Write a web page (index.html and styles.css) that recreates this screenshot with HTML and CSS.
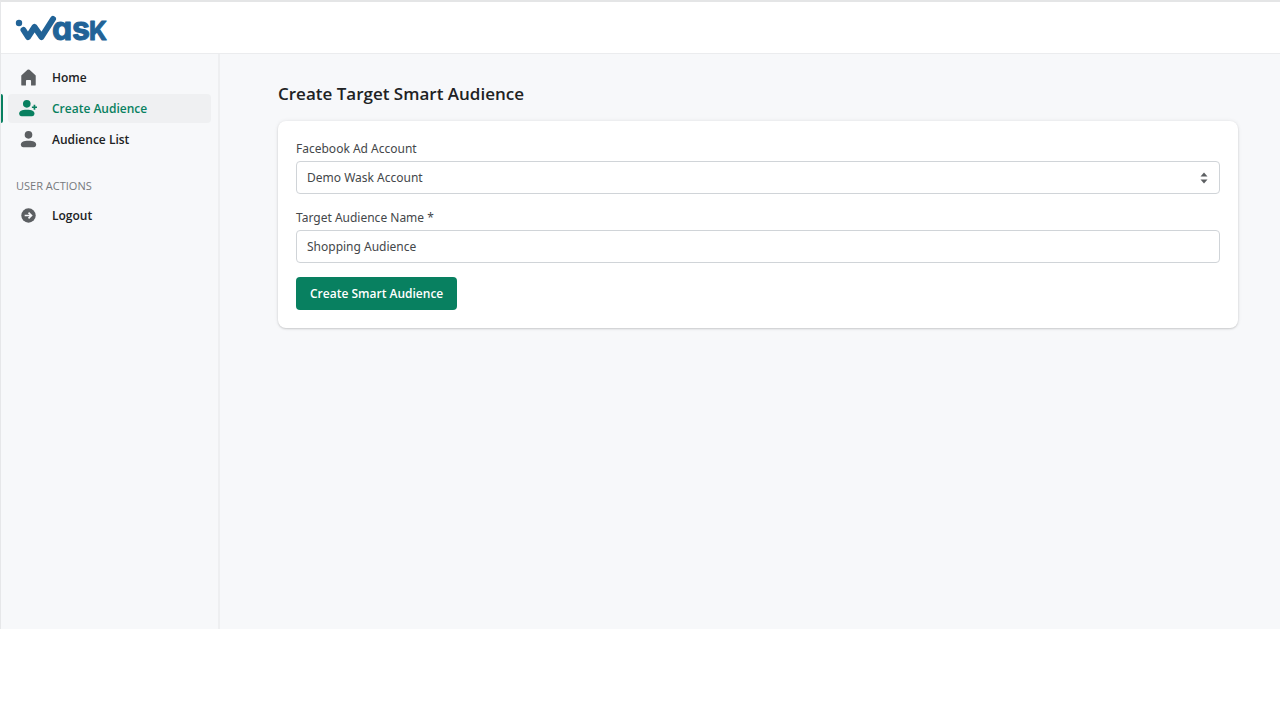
FILE: index.html
```html
<!DOCTYPE html>
<html lang="en">
<head>
<meta charset="utf-8">
<meta name="viewport" content="width=device-width, initial-scale=1">
<title>Create Target Smart Audience</title>
<link rel="stylesheet" href="styles.css">
</head>
<body>
<div class="frame">
  <header class="topbar">
    <a class="brand" href="#" aria-label="Wask home">
      <svg class="brand-logo" viewBox="0 0 100 48" width="100" height="48">
        <circle class="brand-dot" cx="4" cy="19" r="3.200"/>
        <path class="brand-mark" d="M8.500 26 L13 33 L19.500 23 L26.500 33 L38 15"/>
        <text class="brand-text" y="36"><tspan x="37">a</tspan><tspan x="57">s</tspan><tspan class="brand-k" x="74">K</tspan></text>
      </svg>
    </a>
  </header>
  <div class="body">
    <nav class="sidebar" aria-label="Main">
      <ul class="nav">
        <li><a class="nav-link" href="#">
          <svg class="icon" viewBox="0 0 20 20"><path d="M18.500 7.500 11.200 1a1.800 1.800 0 0 0-2.400 0L1.500 7.500V18.500A1 1 0 0 0 2.500 19.500H7V14A1 1 0 0 1 8 13h4a1 1 0 0 1 1 1v5.500h4.500a1 1 0 0 0 1-1Z"/></svg>
          Home</a></li>
        <li><a class="nav-link is-active" href="#" aria-current="page">
          <svg class="icon" viewBox="0 0 20 20"><circle cx="8" cy="4.500" r="4.500"/><path d="M-1 16c0-3 3-4.500 9-4.500s9 1.500 9 4.500c0 2-1 3-3 3H2c-2 0-3-1-3-3Z"/><path class="plus" d="M17 5.500v6M14 8.500h6"/></svg>
          Create Audience</a></li>
        <li><a class="nav-link" href="#">
          <svg class="icon" viewBox="0 0 20 20"><circle cx="10" cy="4.500" r="4.500"/><path d="M1 16c0-3 3-4.500 9-4.500s9 1.500 9 4.500c0 2-1 3-3 3H4c-2 0-3-1-3-3Z"/></svg>
          Audience List</a></li>
      </ul>
      <h2 class="nav-title">USER ACTIONS</h2>
      <ul class="nav">
        <li><a class="nav-link" href="#">
          <svg class="icon" viewBox="0 0 20 20"><circle cx="10" cy="10" r="8.500"/><path class="arrow" d="M5.500 10h8M10 6.500 13.500 10l-3.500 3.500"/></svg>
          Logout</a></li>
      </ul>
    </nav>
    <main class="content">
      <h1 class="title">Create Target Smart Audience</h1>
      <form class="card">
        <div class="field">
          <label for="account">Facebook Ad Account</label>
          <div class="select-wrap">
            <select class="control" id="account"><option>Demo Wask Account</option></select>
            <svg class="select-icon" viewBox="0 0 8 12" width="8" height="12"><path d="M.5 4.500 4 .5l3.500 4ZM.5 7.500 4 11.500l3.500-4Z"/></svg>
          </div>
        </div>
        <div class="field">
          <label for="name">Target Audience Name *</label>
          <input class="control" id="name" type="text" value="Shopping Audience">
        </div>
        <button class="submit" type="button">Create Smart Audience</button>
      </form>
    </main>
  </div>
</div>
</body>
</html>
```
FILE: styles.css
```css
* { box-sizing: border-box; }

body {
  margin: 0;
  min-height: 100vh;
  padding-bottom: 91px;
  display: flex;
  flex-direction: column;
  background: #fff;
  color: #202223;
  font-family: "Open Sans", "Noto Sans", sans-serif;
  font-size: 12px;
  line-height: 20px;
}

.frame {
  flex: 1;
  display: flex;
  flex-direction: column;
  border-top: 2px solid #e4e5e6;
  border-left: 1px solid #e6e7e9;
}

.topbar {
  display: flex;
  align-items: center;
  height: 52px;
  padding: 0 14px;
  background: #fff;
  border-bottom: 1px solid #ebecee;
}

.brand { display: flex; }
.brand-logo { overflow: visible; }
.brand-dot { fill: #216397; }
.brand-mark {
  fill: none;
  stroke: #216397;
  stroke-width: 6;
  stroke-linecap: round;
  stroke-linejoin: round;
}
.brand-text {
  fill: #216397;
  stroke: #216397;
  stroke-width: 1px;
  stroke-linejoin: round;
  font: 700 32px/1 Inter, sans-serif;
  font-feature-settings: "cv11";
}
.brand-k { font-size: 25px; }

.body {
  flex: 1;
  display: flex;
  background: #f7f8fa;
}

.sidebar {
  width: 219px;
  flex-shrink: 0;
  padding: 9px 7px;
  border-right: 2px solid #eeeff1;
}

.nav {
  display: grid;
  gap: 2px;
  margin: 0;
  padding: 0;
  list-style: none;
}

.nav-link {
  position: relative;
  display: flex;
  align-items: center;
  gap: 15px;
  height: 29px;
  padding: 0 12px;
  border-radius: 4px;
  color: #202223;
  font-weight: 600;
  text-decoration: none;
}
.nav-link.is-active {
  background: #eff0f2;
  color: #088060;
}
.nav-link.is-active::before {
  content: "";
  position: absolute;
  top: 0;
  bottom: 0;
  left: -7px;
  width: 2px;
  border-radius: 0 2px 2px 0;
  background: #088060;
}

.icon {
  width: 17px;
  height: 17px;
  overflow: visible;
  fill: #5c5f62;
}
.is-active .icon { fill: #088060; }
.plus { stroke: #088060; stroke-width: 2; }
.arrow { fill: none; stroke: #f7f8fa; stroke-width: 2; }

.nav-title {
  margin: 22px 8px 5px;
  color: #76797c;
  font-size: 11px;
  font-weight: 500;
  line-height: 20px;
}

.content {
  flex: 1;
  min-width: 0;
  padding: 26px 42px 26px 58px;
}

.title {
  margin: 0 0 13px;
  font-size: 17px;
  font-weight: 600;
  line-height: 28px;
}

.card {
  padding: 18px;
  border-radius: 8px;
  background: #fff;
  box-shadow: 0 0 4px rgba(23, 24, 24, .08), 0 1px 2px rgba(0, 0, 0, .15);
}

.field {
  display: grid;
  gap: 2px;
  margin-bottom: 14px;
  color: #44474a;
  font-family: "Noto Sans", "Open Sans", sans-serif;
}

.select-wrap { position: relative; }

.control {
  display: block;
  width: 100%;
  height: 33px;
  padding: 0 10px;
  border: 1px solid #d0d4d8;
  border-radius: 4px;
  background: #fff;
  color: #44474a;
  font: inherit;
  appearance: none;
}

.select-icon {
  position: absolute;
  top: 11px;
  right: 12px;
  fill: #5c5f62;
  pointer-events: none;
}

.submit {
  display: block;
  height: 33px;
  padding: 0 14px;
  border: 0;
  border-radius: 4px;
  background: #088060;
  color: #fff;
  font: inherit;
  font-weight: 600;
}
```
